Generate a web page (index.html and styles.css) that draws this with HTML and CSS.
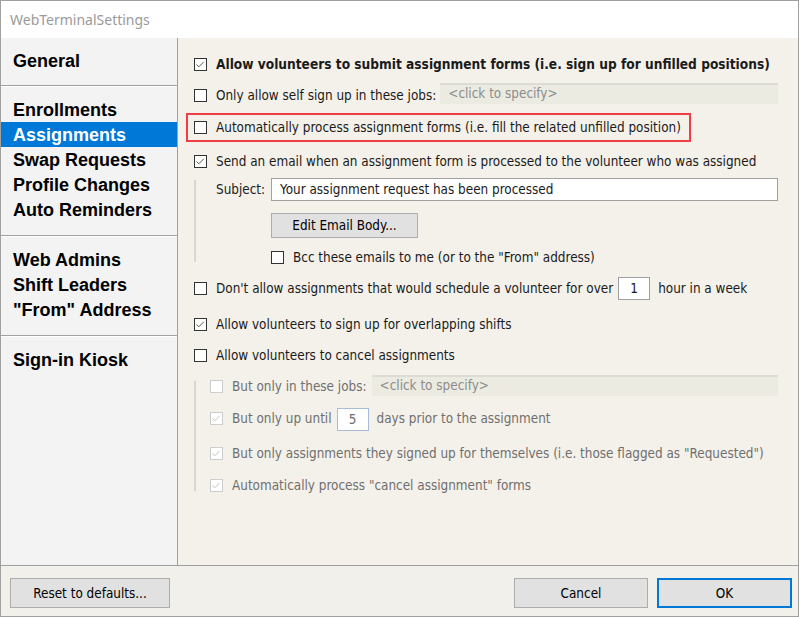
FILE: index.html
```html
<!DOCTYPE html>
<html lang="en">
<head>
    <meta charset="UTF-8">
    <title>WebTerminalSettings</title>
    <link rel="stylesheet" href="styles.css">
</head>
<body>
    <div class="window">
        <div class="titlebar">WebTerminalSettings</div>

        <div class="main">
            <div class="sidebar">
                <div class="nav-group first">
                    <div class="nav-item">General</div>
                </div>
                <div class="nav-group">
                    <div class="nav-item">Enrollments</div>
                    <div class="nav-item active">Assignments</div>
                    <div class="nav-item">Swap Requests</div>
                    <div class="nav-item">Profile Changes</div>
                    <div class="nav-item">Auto Reminders</div>
                </div>
                <div class="nav-group">
                    <div class="nav-item">Web Admins</div>
                    <div class="nav-item">Shift Leaders</div>
                    <div class="nav-item">"From" Address</div>
                </div>
                <div class="nav-group last">
                    <div class="nav-item">Sign-in Kiosk</div>
                </div>
            </div>

            <div class="panel">
                <div class="row r1">
                    <span class="cb checked"><svg width="13" height="13" viewBox="0 0 13 13"><path d="M2.5 6.5 L4.8 8.8 L9.8 3.8" fill="none" stroke="#555" stroke-width="1"/></svg></span>
                    <span class="label bold">Allow volunteers to submit assignment forms (i.e. sign up for unfilled positions)</span>
                </div>
                <div class="row r2">
                    <span class="cb"></span>
                    <span class="label">Only allow self sign up in these jobs:</span>
                    <span class="picker">&lt;click to specify&gt;</span>
                </div>
                <div class="highlight">
                    <span class="cb"></span>
                    <span class="label">Automatically process assignment forms (i.e. fill the related unfilled position)</span>
                </div>
                <div class="row r4">
                    <span class="cb checked"><svg width="13" height="13" viewBox="0 0 13 13"><path d="M2.5 6.5 L4.8 8.8 L9.8 3.8" fill="none" stroke="#555" stroke-width="1"/></svg></span>
                    <span class="label">Send an email when an assignment form is processed to the volunteer who was assigned</span>
                </div>

                <div class="subgroup sub-email">
                    <div class="guide"></div>
                    <div class="sub-body">
                        <div class="subject-row">
                            <span class="label">Subject:</span>
                            <span class="textbox subject">Your assignment request has been processed</span>
                        </div>
                        <div class="btn edit-btn">Edit Email Body...</div>
                        <div class="row bcc-row">
                            <span class="cb"></span>
                            <span class="label">Bcc these emails to me (or to the "From" address)</span>
                        </div>
                    </div>
                </div>

                <div class="row r5">
                    <span class="cb"></span>
                    <span class="label">Don't allow assignments that would schedule a volunteer for over</span>
                    <span class="textbox num">1</span>
                    <span class="label">hour in a week</span>
                </div>
                <div class="row r6">
                    <span class="cb checked"><svg width="13" height="13" viewBox="0 0 13 13"><path d="M2.5 6.5 L4.8 8.8 L9.8 3.8" fill="none" stroke="#555" stroke-width="1"/></svg></span>
                    <span class="label">Allow volunteers to sign up for overlapping shifts</span>
                </div>
                <div class="row r7">
                    <span class="cb"></span>
                    <span class="label">Allow volunteers to cancel assignments</span>
                </div>

                <div class="subgroup sub-cancel">
                    <div class="guide"></div>
                    <div class="sub-body disabled">
                        <div class="row r8">
                            <span class="cb"></span>
                            <span class="label">But only in these jobs:</span>
                            <span class="picker">&lt;click to specify&gt;</span>
                        </div>
                        <div class="row r9">
                            <span class="cb checked"><svg width="13" height="13" viewBox="0 0 13 13"><path d="M2.5 6.5 L4.8 8.8 L9.8 3.8" fill="none" stroke="#c4c4c4" stroke-width="1"/></svg></span>
                            <span class="label">But only up until</span>
                            <span class="textbox num blue">5</span>
                            <span class="label">days prior to the assignment</span>
                        </div>
                        <div class="row r10">
                            <span class="cb checked"><svg width="13" height="13" viewBox="0 0 13 13"><path d="M2.5 6.5 L4.8 8.8 L9.8 3.8" fill="none" stroke="#c4c4c4" stroke-width="1"/></svg></span>
                            <span class="label">But only assignments they signed up for themselves (i.e. those flagged as "Requested")</span>
                        </div>
                        <div class="row r11">
                            <span class="cb checked"><svg width="13" height="13" viewBox="0 0 13 13"><path d="M2.5 6.5 L4.8 8.8 L9.8 3.8" fill="none" stroke="#c4c4c4" stroke-width="1"/></svg></span>
                            <span class="label">Automatically process "cancel assignment" forms</span>
                        </div>
                    </div>
                </div>
            </div>
        </div>

        <div class="footer">
            <div class="btn reset-btn">Reset to defaults...</div>
            <div class="spacer"></div>
            <div class="btn cancel-btn">Cancel</div>
            <div class="btn ok-btn">OK</div>
        </div>
    </div>
</body>
</html>
```

FILE: styles.css
```css
body {
    margin: 0;
    padding: 0;
    background-color: #fff;
    font-family: "DejaVu Sans Condensed", "DejaVu Sans", sans-serif;
    font-stretch: condensed;
    font-size: 13.4px;
    color: #1a1a1a;
}

.window {
    width: 799px;
    height: 617px;
    box-sizing: border-box;
    border: 1px solid #a0a0a0;
    display: flex;
    flex-direction: column;
    background-color: #fff;
}

.titlebar {
    height: 37px;
    flex-shrink: 0;
    display: flex;
    align-items: center;
    padding-left: 9px;
    font-family: "Noto Sans", "Open Sans", sans-serif;
    font-stretch: normal;
    font-size: 14px;
    color: #9a9a9a;
}

.main {
    height: 527px;
    flex-shrink: 0;
    display: flex;
}

/* Левая колонка */
.sidebar {
    width: 176px;
    background-color: #f3f3f3;
    border-right: 1px solid #a0a0a0;
    font-family: "Liberation Sans", Arial, sans-serif;
    font-stretch: normal;
    font-weight: bold;
    font-size: 18px;
    color: #000;
}

.nav-group {
    padding: 10px 0 13px;
    border-bottom: 1px solid #a0a0a0;
    box-shadow: 0 1px 0 #fff;
    margin-bottom: 1px;
}

.nav-group.first {
    padding-bottom: 12px;
}

.nav-group.last {
    border-bottom: none;
    box-shadow: none;
}

.nav-item {
    height: 25px;
    line-height: 27px;
    padding-left: 12px;
}

.nav-item.active {
    background-color: #0078d7;
    color: #fff;
}

/* Правая панель */
.panel {
    flex: 1;
    background-color: #f4f1ea;
    padding: 9px 20px 0 16px;
}

.row {
    display: flex;
    align-items: center;
    height: 32px;
}

.r1 {
    margin-top: 2px;
    height: 30px;
}

.cb {
    width: 13px;
    height: 13px;
    box-sizing: border-box;
    border: 1px solid #333;
    background-color: #fff;
    flex-shrink: 0;
    margin-right: 9px;
    position: relative;
}

.cb svg {
    position: absolute;
    left: -1px;
    top: -1px;
}

.label {
    white-space: nowrap;
}

.bold {
    font-weight: bold;
    font-size: 13.6px;
}

.picker {
    flex: 1;
    margin-left: 4px;
    height: 19px;
    padding-left: 8px;
    background-color: #ebebe1;
    border-top: 2px solid #dcdcd4;
    color: #8c8c8c;
    line-height: 17px;
}

.r2 .picker {
    margin-top: -4px;
}

.highlight {
    display: inline-flex;
    align-items: center;
    height: 25px;
    margin: 2px 0 0 -8px;
    padding: 0 8px 0 6px;
    border: 2px solid #ef3e46;
}

.r4 {
    margin-top: 3px;
}

.subgroup {
    display: flex;
}

.guide {
    width: 2px;
    background-color: #dad7d0;
}

.sub-email .guide {
    margin: 3px 0 11px;
}

.sub-body {
    flex: 1;
}

.sub-email .sub-body {
    padding-left: 20px;
}

.subject-row {
    display: flex;
    align-items: center;
    height: 25px;
}

.textbox {
    box-sizing: border-box;
    height: 23px;
    border: 1px solid #a0a0a0;
    background-color: #fff;
    display: flex;
    align-items: center;
}

.subject {
    flex: 1;
    margin-left: 6px;
    padding-left: 8px;
}

.btn {
    box-sizing: border-box;
    background-color: #e1e1e1;
    border: 1px solid #adadad;
    display: flex;
    align-items: center;
    justify-content: center;
    color: #000;
}

.edit-btn {
    width: 147px;
    height: 25px;
    margin: 11px 0 0 55px;
}

.bcc-row {
    margin: 4px 0 0 55px;
    height: 31px;
}

.r5 {
    margin-top: -1px;
}

.r5 .num {
    margin-left: 5px;
}

.r6 {
    margin-top: 4px;
}

.r7 {
    height: 31px;
}

.num {
    width: 32px;
    margin: 0 8px 0 8px;
    justify-content: center;
}

.num.blue {
    border-color: #a9bcd6;
    color: #6d6d6d;
}

.r9 .num {
    margin: 2px 8px 0 5px;
}

.sub-cancel .guide {
    margin: 10px 0 11px;
}

.sub-cancel .sub-body {
    padding-left: 14px;
}

.disabled .label {
    color: #6f6f6f;
}

.disabled .cb {
    border-color: #cccccc;
}

.r8 {
    height: 30px;
}

.r8 .picker {
    margin-left: 5px;
    margin-top: -2px;
}

.r9 {
    margin-top: 1px;
}

.r10 {
    margin-top: 3px;
}

.r11 {
    height: 33px;
}

/* Нижняя панель с кнопками */
.footer {
    height: 51px;
    box-sizing: border-box;
    flex-shrink: 0;
    border-top: 1px solid #a0a0a0;
    background-color: #f1f0ea;
    display: flex;
    align-items: flex-start;
    padding: 12px 6px 0 9px;
}

.footer .btn {
    height: 30px;
}

.reset-btn {
    width: 160px;
}

.spacer {
    flex: 1;
}

.cancel-btn {
    width: 134px;
    margin-right: 9px;
}

.ok-btn {
    width: 135px;
    border: 2px solid #0078d7;
}
```
